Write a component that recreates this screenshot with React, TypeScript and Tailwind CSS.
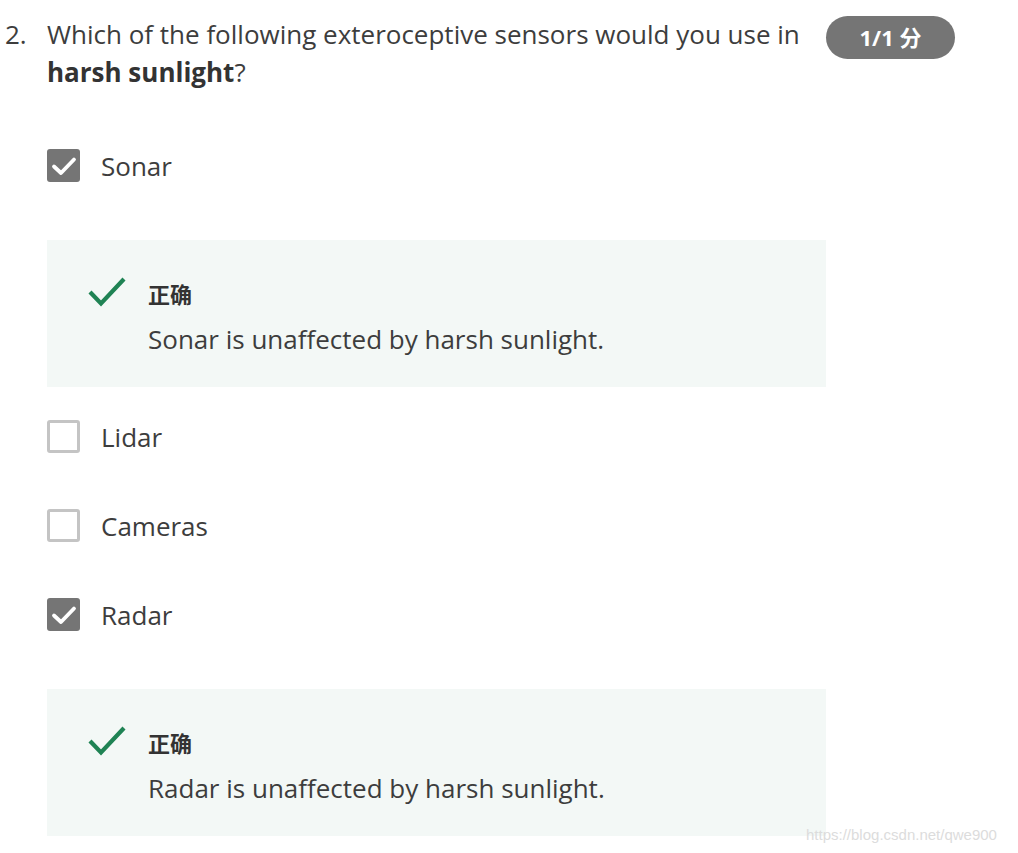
import React from "react";

const font = { fontFamily: '"Open Sans", "Noto Sans CJK SC", sans-serif' };

function Checkbox({ checked }: { checked: boolean }) {
  if (checked) {
    return (
      <div className="w-[33px] h-[33px] rounded-[3px] bg-[#757575] flex items-center justify-center shrink-0">
        <svg width="26" height="22" viewBox="0 0 26 22">
          <path d="M3 11.5 L10 18 L23 4.5" fill="none" stroke="#fff" strokeWidth="3.8" strokeLinecap="round" strokeLinejoin="round" />
        </svg>
      </div>
    );
  }
  return <div className="w-[33px] h-[33px] rounded-[3px] border-[3px] border-[#c4c4c4] bg-white shrink-0" />;
}

function Option({ label, checked }: { label: string; checked: boolean }) {
  return (
    <div className="flex items-center h-[33px]">
      <Checkbox checked={checked} />
      <span className="ml-[21px] text-[26px] text-[#3d3d3d] leading-none">{label}</span>
    </div>
  );
}

function Feedback({ text }: { text: string }) {
  return (
    <div className="w-[779px] h-[147px] bg-[#f3f8f6] flex pl-[41px] pt-[36px]">
      <svg width="38" height="31" viewBox="0 0 38 31" className="shrink-0">
        <path d="M2 16 L13 27.5 L36 3" fill="none" stroke="#1f8354" strokeWidth="4.2" />
      </svg>
      <div className="ml-[22px]">
        <div className="text-[22px] font-bold text-[#333] leading-[30px] mt-[3px]">正确</div>
        <div className="text-[26px] text-[#3d3d3d] leading-[36px] mt-[12px]">{text}</div>
      </div>
    </div>
  );
}

export default function App() {
  return (
    <div className="relative w-[1018px] h-[853px] bg-white overflow-hidden" style={font}>
      <div className="flex pt-[15px]">
        <div className="w-[47px] pl-[5px] text-[26px] leading-[38px] text-[#3d3d3d]">2.</div>
        <div className="w-[768px] text-[26px] leading-[38px] text-[#3d3d3d]">
          Which of the following exteroceptive sensors would you use in <b className="font-bold text-[#333]">harsh sunlight</b>?
        </div>
        <div className="ml-[11px] mt-[1px] w-[129px] h-[43px] rounded-full bg-[#757575] text-white text-[22px] font-bold flex items-center justify-center">
          1/1 分
        </div>
      </div>

      <div className="ml-[47px] mt-[58px] flex flex-col">
        <Option label="Sonar" checked />
        <div className="mt-[58px]">
          <Feedback text="Sonar is unaffected by harsh sunlight." />
        </div>
        <div className="mt-[33px]">
          <Option label="Lidar" checked={false} />
        </div>
        <div className="mt-[56px]">
          <Option label="Cameras" checked={false} />
        </div>
        <div className="mt-[56px]">
          <Option label="Radar" checked />
        </div>
        <div className="mt-[58px]">
          <Feedback text="Radar is unaffected by harsh sunlight." />
        </div>
      </div>

      <div
        className="absolute left-[806px] top-[825px] text-[15px] text-[#dcdcdc] leading-[20px]"
        style={{ fontFamily: '"Liberation Sans", Arial, sans-serif' }}
      >
        https://blog.csdn.net/qwe900
      </div>
    </div>
  );
}
